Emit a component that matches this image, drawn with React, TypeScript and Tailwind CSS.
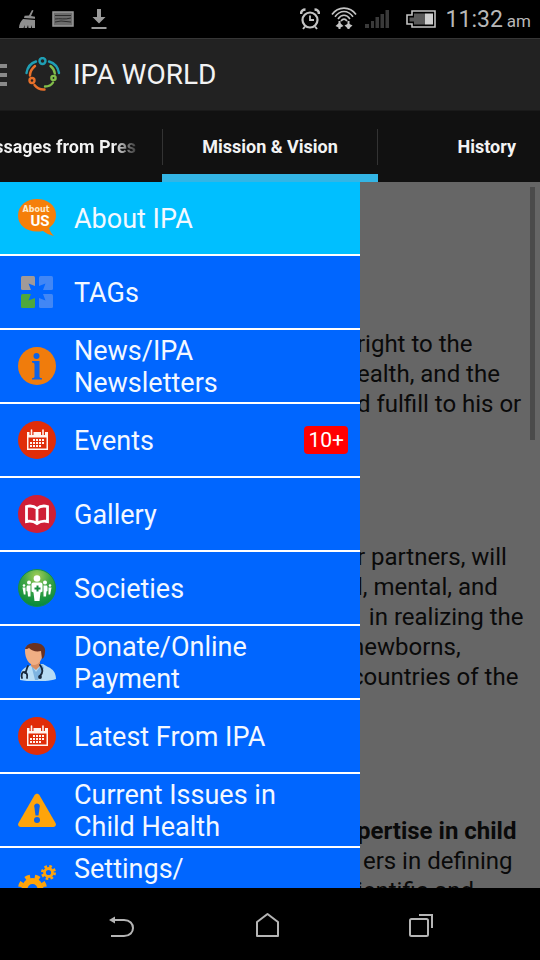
import { FC, ReactNode } from "react";

interface MenuItem {
  label: string;
  icon: ReactNode;
  badge?: string;
  active?: boolean;
}

const AboutIcon = () => (
  <svg viewBox="0 0 38 38" className="size-[38px] shrink-0" aria-hidden="true">
    <path d="M19 0C29 0 38 6 38 16c0 6-3 10-7 13 1 3 2 5 5 8-5-1-8-3-11-5-2 .4-4 .5-6 .5C8 32.500 0 26 0 16.500 0 6 9 0 19 0z" fill="#f57f0a" />
    <text textAnchor="middle" fontWeight="bold">
      <tspan x="18" y="13" fontFamily="'DejaVu Sans', sans-serif" fontSize="8" fill="#ffe9c8">About</tspan>
      <tspan x="22" y="27" fontFamily="Roboto, sans-serif" fontSize="15" fill="#fff">US</tspan>
    </text>
  </svg>
);

const TagsIcon = () => (
  <svg viewBox="0 0 38 38" className="size-[38px] shrink-0" aria-hidden="true">
    <rect x="3" y="3" width="14" height="14" rx="1.500" fill="#a09a98" />
    <rect x="21" y="3" width="14" height="14" rx="1.500" fill="#4287f5" />
    <rect x="3" y="21" width="14" height="14" rx="1.500" fill="#4fa83d" />
    <rect x="21" y="21" width="14" height="14" rx="1.500" fill="#4287f5" />
    <path d="M19 10L21 13 27.500 10.500 25 17 28 19 25 21 27.500 27.500 21 25 19 28 17 25 10.500 27.500 13 21 10 19 13 17 10.500 10.500 17 13z" fill="#0066ff" />
  </svg>
);

const InfoIcon = () => (
  <svg viewBox="0 0 38 38" className="size-[38px] shrink-0" aria-hidden="true">
    <circle cx="19" cy="19" r="19" fill="#f07c0c" />
    <circle cx="18.500" cy="9" r="3" fill="#0d63e8" />
    <path d="M14 14h7.500v15.500c0 1 .8 1.500 2.500 1.700V32.500H14v-1.300c1.700-.2 2.500-.7 2.500-1.700V17.500c0-1.300-.8-1.900-2.500-2z" fill="#0d63e8" />
  </svg>
);

const CalendarIcon = () => (
  <svg viewBox="0 0 38 38" className="size-[38px] shrink-0" aria-hidden="true">
    <circle cx="19" cy="19" r="19" fill="#e02d08" />
    <path d="M9 11h21v18H9z" fill="#fff4ee" />
    <path d="M10.500 16.500h18v11h-18z" fill="#e02d08" />
    <path d="M13.500 9v5M25 9v5" stroke="#e02d08" strokeWidth="4" />
    <path d="M13.500 9v4.500M25 9v4.500" stroke="#fff4ee" strokeWidth="1.600" strokeLinecap="round" />
    <path d="M15 19h12M12 22h15M12 25h12" stroke="#fff4ee" strokeWidth="2" strokeDasharray="2 1" />
  </svg>
);

const BookIcon = () => (
  <svg viewBox="0 0 38 38" className="size-[38px] shrink-0" aria-hidden="true">
    <circle cx="19" cy="19" r="19" fill="#cf1f36" />
    <path d="M8.500 11.500c4-1 7.500-.5 10.500 2 3-2.500 6.500-3 10.500-2v15c-4-.7-7.500-.2-10.500 2-3-2.200-6.500-2.700-10.500-2zM19 13.500v14.500" fill="none" stroke="#fff" strokeWidth="2.800" />
  </svg>
);

const SocietiesIcon = () => (
  <svg viewBox="0 0 38 38" className="size-[38px] shrink-0" aria-hidden="true">
    <defs>
      <radialGradient id="green-ball" cx="50%" cy="18%" r="80%">
        <stop offset="0" stopColor="#a4cf58" />
        <stop offset="0.450" stopColor="#3fa545" />
        <stop offset="1" stopColor="#078a3c" />
      </radialGradient>
    </defs>
    <circle cx="19" cy="19" r="18.500" fill="url(#green-ball)" stroke="#168c4a" />
    <g fill="#fff">
      <circle cx="19" cy="9.500" r="3.300" />
      <path d="M15.500 13.500h7c1.200 0 2 .8 2 2v7l-2 1-1 8.500h-5l-1-8.500-2-1v-7c0-1.200.8-2 2-2z" />
      <circle cx="11" cy="13.500" r="2" />
      <circle cx="27" cy="13.500" r="2" />
      <path d="M9 16.500h3.500v11H10l-.5-5-1-.5v-4zM29 16.500h-3.500v11H28l.5-5 1-.5v-4z" />
      <circle cx="6" cy="16.500" r="1.300" />
      <circle cx="32" cy="16.500" r="1.300" />
      <path d="M4.500 18.500H7.500v7H5.800zM33.500 18.500H30.500v7h1.700z" />
    </g>
    <path d="M19.500 16.500v6M16.500 19.500h6" stroke="#168c3c" strokeWidth="2" />
  </svg>
);

const DoctorIcon = () => (
  <svg viewBox="0 0 38 38" className="size-[38px] shrink-0" aria-hidden="true">
    <path d="M2 37c0-8 2-12 9-14l5-2h9l5 3c5 2 8 6 8 12-9 3-27 3-36 1z" fill="#b7dcf5" />
    <path d="M13 21l5 8 6-8 2 4-6 12h-3z" fill="#7db3e0" />
    <path d="M13 17h9v6l-4 4-5-4z" fill="#d98e62" />
    <path d="M7 8c0-5 4-7 9-7 6 0 10 3 9 9-.6 6-4 12-9 12S7 15 7 8z" fill="#f0ae83" />
    <path d="M7 6c1-4 5-6 10-6 7 0 11 4 10 9-.4 4-1 6-3 7l-1-8c-5 1-9 0-12-3-1 1-3 1-4 1z" fill="#6b3222" />
    <path d="M10 23c-2 3-1 5-3 7M4 35c-1-3 0-6 2-6s4 2 3 6M22 22c3 4 3 8 0 11" fill="none" stroke="#17283d" strokeWidth="1.800" strokeLinecap="round" />
    <circle cx="22" cy="34" r="1.900" fill="#17283d" />
  </svg>
);

const WarningIcon = () => (
  <svg viewBox="0 0 38 38" className="size-[38px] shrink-0" aria-hidden="true">
    <path d="M16.500 4.200c1.200-2 3.800-2 5 0L37.500 32c1 2 0 4-2.200 4H2.700C.5 36-.5 34 .5 32z" fill="#ffa40a" />
    <path d="M16.200 15c0-3.500 5.600-3.500 5.600 0l-1.300 9.500h-3z" fill="#0d63e8" />
    <circle cx="19" cy="29" r="3" fill="#0d63e8" />
  </svg>
);

const GearsIcon = () => (
  <svg viewBox="0 0 38 38" className="size-[38px] shrink-0" aria-hidden="true">
    <g fill="none" stroke="#ffa40a">
      <circle cx="14.500" cy="24" r="8" strokeWidth="6" />
      <circle cx="14.500" cy="24" r="12.500" strokeWidth="4" strokeDasharray="5 4.817" strokeDashoffset="-2" />
      <circle cx="30.500" cy="7.500" r="4" strokeWidth="2.800" />
      <circle cx="30.500" cy="7.500" r="6.200" strokeWidth="2.600" strokeDasharray="2.600 2.270" />
    </g>
  </svg>
);

const menuItems: MenuItem[] = [
  { label: "About IPA", icon: <AboutIcon />, active: true },
  { label: "TAGs", icon: <TagsIcon /> },
  { label: "News/IPA Newsletters", icon: <InfoIcon /> },
  { label: "Events", icon: <CalendarIcon />, badge: "10+" },
  { label: "Gallery", icon: <BookIcon /> },
  { label: "Societies", icon: <SocietiesIcon /> },
  { label: "Donate/Online Payment", icon: <DoctorIcon /> },
  { label: "Latest From IPA", icon: <CalendarIcon /> },
  { label: "Current Issues in Child Health", icon: <WarningIcon /> },
  { label: "Settings/\n\u00a0", icon: <GearsIcon /> },
];

const StatusBar = () => (
  <div className="flex h-[38px] shrink-0 items-center justify-between bg-black pl-[18px] pr-[9px] text-[#b8b8b8]">
    <div className="flex items-center gap-4">
      <svg viewBox="0 0 18 20" className="h-5 w-[18px]" fill="#8f8f8f" aria-hidden="true">
        <path d="M14 1l1.500.6L13 7l4 .8v2L6 9l.6-2.300 4.400-.2zM5 10l12 1v8h-3l-.5-3-.5 3h-2.500l-.5-3-1 3H6.500l.5-3-1.500 3H1c0-4 2-7 4-9z" />
      </svg>
      <svg viewBox="0 0 22 16" className="h-4 w-[22px]" aria-hidden="true">
        <rect x="1" y="1" width="20" height="14" fill="#6c6c6c" stroke="#9a9a9a" strokeWidth="1.500" />
        <path d="M3 4.500h16M3 8c5-1 9 1 16-1M3 11l6-1 10 1" stroke="#2c2c2c" fill="none" />
      </svg>
      <svg viewBox="0 0 18 20" className="h-5 w-[18px]" fill="#9a9a9a" aria-hidden="true">
        <path d="M7 0h4v8h4.500L9 14.500 2.500 8H7zM1.500 18h15v2h-15z" />
      </svg>
    </div>
    <div className="flex items-center">
      <svg viewBox="0 0 20 22" className="mr-[11px] h-[22px] w-5" fill="none" stroke="#c4c4c4" aria-hidden="true">
        <circle cx="10" cy="12" r="7.500" strokeWidth="2.200" />
        <path d="M10 7.500V12h4" strokeWidth="1.800" />
        <path d="M1 6c0-3 2-4.500 4.500-4.500M19 6c0-3-2-4.500-4.500-4.500" strokeWidth="2.600" />
        <path d="M5 18.500L3 21M15 18.500l2 2.500" strokeWidth="2" />
      </svg>
      <svg viewBox="0 0 26 24" className="mr-2 h-6 w-[26px]" fill="none" stroke="#c4c4c4" strokeWidth="1.600" aria-hidden="true">
        <path d="M1 7.500C7-1 19-1 25 7.500M4 9.800C9 2.800 17 2.800 22 9.800M7 12c3.500-5 8.500-5 12 0M10 14c1.800-2.500 4.200-2.500 6 0" />
        <path d="M8.500 14v8M17.500 14v8" strokeWidth="2" />
        <path d="M4.500 19l4-3.500 4 3.500-4 2zM13.500 18.500l4-2 4 2-4 3.500z" fill="#c4c4c4" stroke="none" />
      </svg>
      <svg viewBox="0 0 24 18" className="mr-[17px] h-[18px] w-6" fill="#3a3a3a" aria-hidden="true">
        <path d="M0 14h4v4H0zM6 11h3v7H6zM10.500 7h3.500v11h-3.500zM15.500 4H19v14h-3.500zM20.500 0H24v18h-3.500z" />
      </svg>
      <svg viewBox="0 0 30 18" className="mr-[10px] h-[18px] w-[30px]" aria-hidden="true">
        <path d="M6 1h23v16H6v-3H1V5h5z" fill="none" stroke="#c4c4c4" strokeWidth="1.600" />
        <path d="M8 3.500h11v11H8v-3H3.500v-4H8z" fill="#5a5a5a" />
        <path d="M19 3.500h8v11h-8z" fill="#d0d0d0" />
      </svg>
      <span className="flex items-baseline gap-1 pt-0.5 text-[23px] leading-8">
        11:32 <span className="text-[17px]">am</span>
      </span>
    </div>
  </div>
);

const Logo = () => (
  <svg viewBox="0 2 36 36" className="size-9" fill="none" strokeWidth="2.400" strokeLinecap="round" aria-hidden="true">
    <g stroke="#1f9fb4">
      <circle cx="17.500" cy="6" r="3" />
      <path d="M1.500 18C2.500 12 6 8 11 6.500M24 6.500C29 8 33 12 34 18" />
    </g>
    <g stroke="#e8702a">
      <circle cx="7" cy="25.500" r="2.500" />
      <path d="M5 20.500c0-4 2-7 5-9.500M9.500 30c2.500 3.300 6 4.800 10 4.500" />
    </g>
    <g stroke="#82bd4a">
      <circle cx="28.500" cy="23" r="2.100" />
      <path d="M25.500 11c2.500 2 4 4.500 4.300 7.500M28 27.500c-1.500 2.500-4 4-8 4" />
    </g>
  </svg>
);

const ActionBar = () => (
  <header className="flex h-[73px] shrink-0 items-center border-b border-t border-b-[#1a1a1a] border-t-[#363636] bg-[#222222]">
    <button aria-label="Open menu" className="flex w-[25px] flex-col gap-[5px]">
      <span className="h-1 w-[7px] bg-[#8a8a8a]"></span>
      <span className="h-1 w-[7px] bg-[#8a8a8a]"></span>
      <span className="h-1 w-[7px] bg-[#8a8a8a]"></span>
    </button>
    <Logo />
    <h1 className="pl-3 text-[28px] leading-8 text-[#f3f3f3]">IPA WORLD</h1>
  </header>
);

const TabStrip = () => (
  <nav className="flex h-[71px] shrink-0 bg-[#111111] text-lg font-bold text-[#f3f3f3]">
    <button className="flex w-[30%] items-center justify-end overflow-hidden whitespace-nowrap bg-gradient-to-r from-[#f3f3f3] from-70% to-[#333333] to-85% bg-clip-text pr-[26px] text-transparent">
      Messages from Pres
    </button>
    <button className="flex w-[40%] flex-col border-b-8 border-[#33b5e5] pt-[18px]">
      <span className="flex h-9 w-full items-center justify-center border-x border-[#333333]">Mission &amp; Vision</span>
    </button>
    <button className="flex w-[30%] items-center justify-end pr-6">History</button>
  </nav>
);

const MenuRow: FC<MenuItem> = ({ label, icon, badge, active }) => {
  return (
    <li className="border-b-2 border-white">
      <button className={`flex h-[72px] w-full items-center pl-[18px] pr-3 text-left ${active ? "bg-[#00bfff]" : "bg-[#0066ff]"}`}>
        {icon}
        <span className="w-[224px] whitespace-pre-line pl-[18px] pt-0.5 text-[27px] leading-8 text-[#f3f8ff]">{label}</span>
        {badge && (
          <span className="ml-auto rounded-sm bg-[#ff0000] px-1 text-[21px] leading-7 text-white">{badge}</span>
        )}
      </button>
    </li>
  );
};

const Article = () => (
  <main className="relative min-w-0 flex-1 overflow-hidden whitespace-nowrap bg-[#666666] text-2xl leading-[30px] text-[#0a0a0a]">
    {/* lines run on from under the drawer */}
    <div className="-ml-[9px] flex flex-col pt-[147px]">
      <p>
        &nbsp;right to the
        <br />
        &nbsp;ealth, and the
        <br />
        &nbsp;d fulfill to his or
      </p>
      <p className="pt-[123px]">
        &nbsp;r partners, will
        <br />
        &nbsp;l, mental, and
        <br />
        &nbsp;&nbsp;&nbsp;in realizing the
        <br />
        newborns,
        <br />
        countries of the
      </p>
      <p className="pt-[124px]">
        <strong>&nbsp;pertise in child</strong>
        <br />
        &nbsp;&nbsp;ers in defining
        <br />
        &nbsp;ientific and
      </p>
    </div>
    {/* scroll thumb */}
    <div className="absolute right-[5px] top-[5px] h-[253px] w-[5px] bg-[#4b4b4b]"></div>
  </main>
);

const NavBar = () => (
  <footer className="flex h-[72px] shrink-0 items-center justify-between bg-black px-[107px]">
    <button aria-label="Back">
      <svg viewBox="0 0 28 28" className="size-7" fill="none" stroke="#b5b5b5" strokeWidth="2" aria-hidden="true">
        <path d="M7 10h10c12 0 12 16 0 16H4" />
        <path d="M2 10l6-3.500v7z" fill="#b5b5b5" stroke="none" />
      </svg>
    </button>
    <button aria-label="Home">
      <svg viewBox="0 0 28 28" className="size-7" fill="none" stroke="#b5b5b5" strokeWidth="2" strokeLinejoin="round" aria-hidden="true">
        <path d="M1 12L11.500 4 22 12V26H1z" />
      </svg>
    </button>
    <button aria-label="Recent apps">
      <svg viewBox="0 0 28 28" className="size-7" fill="none" stroke="#b5b5b5" strokeWidth="2" aria-hidden="true">
        <rect x="5" y="9" width="18" height="17" rx="1.500" />
        <path d="M14 5h13v13" />
      </svg>
    </button>
  </footer>
);

const App: FC = () => {
  return (
    <div className="flex h-screen flex-col overflow-hidden bg-black font-['Roboto',sans-serif]">
      <StatusBar />
      <ActionBar />
      <TabStrip />
      <div className="flex min-h-0 flex-1 overflow-hidden">
        <aside className="w-2/3 overflow-hidden bg-[#0066ff]">
          <ul>
            {menuItems.map((item) => (
              <MenuRow key={item.label} {...item} />
            ))}
          </ul>
        </aside>
        <Article />
      </div>
      <NavBar />
    </div>
  );
};

export default App;
